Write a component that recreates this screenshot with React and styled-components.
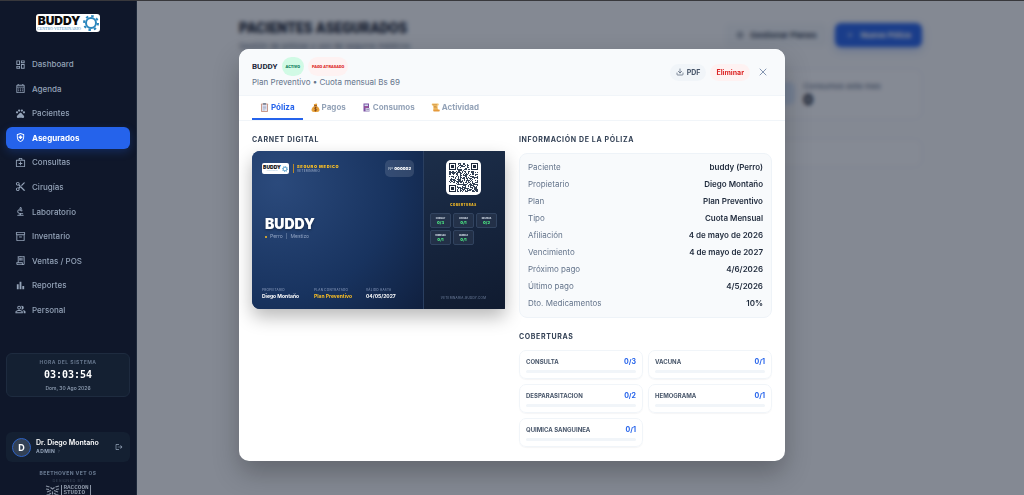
import React from 'react';
import styled, { createGlobalStyle } from 'styled-components';
import {
    MdOutlineDashboard,
    MdOutlineCalendarMonth,
    MdPets,
    MdOutlineHealthAndSafety,
    MdOutlineMedicalServices,
    MdContentCut,
    MdOutlineBiotech,
    MdOutlineInventory2,
    MdOutlineReceiptLong,
    MdBarChart,
    MdOutlinePeopleAlt,
    MdLogout,
} from 'react-icons/md';
import { Download, X, ChevronRight, Plus, Settings } from 'lucide-react';

const menu = [
    { label: 'Dashboard', icon: MdOutlineDashboard },
    { label: 'Agenda', icon: MdOutlineCalendarMonth },
    { label: 'Pacientes', icon: MdPets },
    { label: 'Asegurados', icon: MdOutlineHealthAndSafety, active: true },
    { label: 'Consultas', icon: MdOutlineMedicalServices },
    { label: 'Cirugías', icon: MdContentCut },
    { label: 'Laboratorio', icon: MdOutlineBiotech },
    { label: 'Inventario', icon: MdOutlineInventory2 },
    { label: 'Ventas / POS', icon: MdOutlineReceiptLong },
    { label: 'Reportes', icon: MdBarChart },
    { label: 'Personal', icon: MdOutlinePeopleAlt },
];

const info = [
    ['Paciente', 'buddy (Perro)'],
    ['Propietario', 'Diego Montaño'],
    ['Plan', 'Plan Preventivo'],
    ['Tipo', 'Cuota Mensual'],
    ['Afiliación', '4 de mayo de 2026'],
    ['Vencimiento', '4 de mayo de 2027'],
    ['Próximo pago', '4/6/2026'],
    ['Último pago', '4/5/2026'],
    ['Dto. Medicamentos', '10%'],
];

const coverages = [
    { name: 'CONSULTA', short: 'CONSULT', used: 0, total: 3 },
    { name: 'VACUNA', short: 'VACUNA', used: 0, total: 1 },
    { name: 'DESPARASITACION', short: 'DESPARA', used: 0, total: 2 },
    { name: 'HEMOGRAMA', short: 'HEMOGRA', used: 0, total: 1 },
    { name: 'QUIMICA SANGUINEA', short: 'QUIMICA', used: 0, total: 1 },
];

const BuddyLogo = ({ small }) => (
    <LogoBox $small={small}>
        <LogoText>
            <LogoName $small={small}>BUDDY</LogoName>
            <LogoSub $small={small}>CENTRO VETERINARIO</LogoSub>
        </LogoText>
        <svg width={small ? 6 : 16} height={small ? 6 : 16} viewBox="0 0 32 32">
            <circle cx="16" cy="16" r="10" fill="none" stroke="#2a86bd" strokeWidth="4" />
            <circle cx="16" cy="16" r="14" fill="none" stroke="#2a86bd" strokeWidth="4" strokeDasharray="5 6" />
        </svg>
    </LogoBox>
);

const Clipboard = () => (
    <svg width="9" height="9" viewBox="0 0 18 18">
        <rect x="2" y="1" width="14" height="17" rx="1.5" fill="#c99a8c" />
        <rect x="4" y="3" width="10" height="13" fill="#e6e8f4" />
        <rect x="6" y="0" width="6" height="3.5" rx="1" fill="#7d8799" />
        <path d="M5.5 6.5h7M5.5 9h7M5.5 11.5h7M5.5 14h4" stroke="#8994b5" strokeWidth="1" />
    </svg>
);

const MoneyBag = () => (
    <svg width="9" height="9" viewBox="0 0 18 18">
        <path d="M7 6 5.5 2.5C7 1 8 3 9 1.5S12 1 12.5 2.5L11 6c4 2 6 5 6 8 0 2.5-2 4-5 4H6c-3 0-5-1.5-5-4 0-3 2-6 6-8z" fill="#e8a23a" />
        <path d="M6 5.5h6" stroke="#8a4a1c" strokeWidth="2" />
        <path d="M11.5 9.5c-1-1-4.5-1-4.5 1s4.5 1 4.5 3-3.5 2.2-5 1M9 8v9" stroke="#7a3d14" strokeWidth="1.4" fill="none" />
    </svg>
);

const Receipt = () => (
    <svg width="9" height="9" viewBox="0 0 18 18">
        <path d="M3 1h11v16H3z" fill="#7a4fa3" />
        <path d="M7 10h9v8l-2-1.5-2 1.5-2-1.5L7 18z" fill="#c9c4de" />
        <rect x="5" y="3" width="7" height="3" fill="#cfe0ef" />
        <path d="M5 8h7" stroke="#d65c8a" strokeWidth="1.5" />
        <path d="M9 13h5" stroke="#6c6690" />
    </svg>
);

const Scroll = () => (
    <svg width="9" height="9" viewBox="0 0 18 18">
        <path d="M3 1h11c2 0 2 4 0 4h-1l1 9H5L4 5H3C1 5 1 1 3 1z" fill="#f4c26b" />
        <path d="M5 13h11c2 0 2 4 0 4H6c-2 0-2-4-1-4z" fill="#e59a3c" />
        <path d="M3 3.5h9M6 7h5M6 9.5h6" stroke="#b5712a" strokeWidth="1" />
    </svg>
);

const tabs = [
    { label: 'Póliza', icon: Clipboard, active: true },
    { label: 'Pagos', icon: MoneyBag },
    { label: 'Consumos', icon: Receipt },
    { label: 'Actividad', icon: Scroll },
];

const QR_SIZE = 29;

const inFinder = (x, y) => (x < 8 && y < 8) || (x > QR_SIZE - 9 && y < 8) || (x < 8 && y > QR_SIZE - 9);

const qrPath = () => {
    let seed = 41;
    let d = '';
    for (let y = 0; y < QR_SIZE; y++) {
        for (let x = 0; x < QR_SIZE; x++) {
            seed = (seed * 1103515245 + 12345) % 2147483648;
            if (!inFinder(x, y) && seed / 2147483648 > 0.5) d += `M${x} ${y}h1v1h-1z`;
        }
    }
    return d;
};

const QrCode = () => (
    <QrBox>
        <svg width="29" height="29" viewBox="0 0 29 29">
            <path d={qrPath()} fill="#334155" />
            {[[0, 0], [22, 0], [0, 22]].map(([x, y]) => (
                <g key={`${x}-${y}`}>
                    <rect x={x + 0.5} y={y + 0.5} width="6" height="6" fill="none" stroke="#1e293b" />
                    <rect x={x + 2} y={y + 2} width="3" height="3" fill="#1e293b" />
                </g>
            ))}
        </svg>
    </QrBox>
);

const Sidebar = () => (
    <SidebarWrapper>
        <BuddyLogo />
        <Nav>
            {menu.map(({ label, icon: Icon, active }) => (
                <NavItem href="#" key={label} $active={active}>
                    <Icon size={11} />
                    {label}
                </NavItem>
            ))}
        </Nav>
        <ClockBox>
            <ClockTitle>HORA DEL SISTEMA</ClockTitle>
            <ClockTime>03:03:54</ClockTime>
            <ClockDate>Dom, 30 Ago 2026</ClockDate>
        </ClockBox>
        <UserBox>
            <Avatar>D</Avatar>
            <UserText>
                <UserName>Dr. Diego Montaño</UserName>
                <UserRole>ADMIN <ChevronRight size={4} /></UserRole>
            </UserText>
            <LogoutButton aria-label="Cerrar sesión"><MdLogout size={8} /></LogoutButton>
        </UserBox>
        <Credits>
            <CreditsName>BEETHOVEN VET OS</CreditsName>
            <CreditsBy>DESIGNED BY</CreditsBy>
            <Studio>
                <svg width="15" height="12" viewBox="0 0 30 24" fill="none" stroke="#8b95a5" strokeWidth="2.4">
                    <path d="M2 2l7 2M28 2l-7 2M2 8l6 1M28 8l-6 1M11 5l4 3 4-3M4 14l8-3M26 14l-8-3M9 16l3 2M21 16l-3 2M15 13v6M3 20l7-1M27 20l-7-1" />
                </svg>
                <StudioText>RACCOON<br />STUDIO</StudioText>
            </Studio>
        </Credits>
    </SidebarWrapper>
);

const Background = () => (
    <Main>
        <PageHead>
            <div>
                <PageTitle>PACIENTES ASEGURADOS</PageTitle>
                <PageSub>Gestión de pólizas y uso de seguros médicos</PageSub>
            </div>
            <PageActions>
                <PageButton><Settings size={8} />Gestionar Planes</PageButton>
                <PageButton $primary><Plus size={8} />Nueva Póliza</PageButton>
            </PageActions>
        </PageHead>
        <Stats>
            <StatCard />
            <StatCard />
            <StatCard />
            <StatCard>
                <StatIcon />
                <div>
                    <StatLabel>Consumos este mes</StatLabel>
                    <StatValue>0</StatValue>
                </div>
            </StatCard>
        </Stats>
        <SearchBar />
    </Main>
);

const DigitalCard = () => (
    <Card>
        <CardLeft>
            <CardTop>
                <BuddyLogo small />
                <CardBrand>
                    <CardBrandTitle>SEGURO MEDICO</CardBrandTitle>
                    <CardBrandSub>VETERINARIO</CardBrandSub>
                </CardBrand>
                <CardNumber>Nº <b>000002</b></CardNumber>
            </CardTop>
            <CardMiddle>
                <CardPet>BUDDY</CardPet>
                <CardBreed><Dot />Perro <span>|</span> Mestizo</CardBreed>
            </CardMiddle>
            <CardFoot>
                <CardField><small>PROPIETARIO</small>Diego Montaño</CardField>
                <CardField $gold><small>PLAN CONTRATADO</small>Plan Preventivo</CardField>
                <CardField><small>VÁLIDO HASTA</small>04/05/2027</CardField>
            </CardFoot>
        </CardLeft>
        <CardRight>
            <QrCode />
            <CardCoverTitle>COBERTURAS</CardCoverTitle>
            <MiniGrid>
                {coverages.map(c => (
                    <MiniBox key={c.name}>
                        <small>{c.short}</small>
                        {c.used}/{c.total}
                    </MiniBox>
                ))}
            </MiniGrid>
            <CardSite>VETERINARIA-BUDDY.COM</CardSite>
        </CardRight>
    </Card>
);

const PolicyModal = () => (
    <Overlay>
        <Modal role="dialog" aria-label="Póliza de Buddy">
            <ModalHeader>
                <div>
                    <TitleRow>
                        <ModalTitle>BUDDY</ModalTitle>
                        <Badge $bg="#d1fae5" $color="#047857">ACTIVO</Badge>
                        <Badge $bg="#fef2f2" $color="#dc2626">PAGO ATRASADO</Badge>
                    </TitleRow>
                    <ModalSub>Plan Preventivo • Cuota mensual Bs 69</ModalSub>
                </div>
                <ModalActions>
                    <PillButton><Download size={8} />PDF</PillButton>
                    <PillButton $danger>Eliminar</PillButton>
                    <CloseButton aria-label="Cerrar"><X size={12} strokeWidth={2} /></CloseButton>
                </ModalActions>
            </ModalHeader>
            <Tabs>
                {tabs.map(({ label, icon: Icon, active }) => (
                    <Tab key={label} $active={active}><Icon />{label}</Tab>
                ))}
            </Tabs>
            <ModalBody>
                <section>
                    <SectionTitle $tight>CARNET DIGITAL</SectionTitle>
                    <DigitalCard />
                </section>
                <section>
                    <SectionTitle>INFORMACIÓN DE LA PÓLIZA</SectionTitle>
                    <InfoBox>
                        {info.map(([name, value]) => (
                            <InfoRow key={name}>
                                <dt>{name}</dt>
                                <dd>{value}</dd>
                            </InfoRow>
                        ))}
                    </InfoBox>
                    <SectionTitle>COBERTURAS</SectionTitle>
                    <CoverGrid>
                        {coverages.map(c => (
                            <CoverCard key={c.name}>
                                <CoverHead>{c.name}<span>{c.used}/{c.total}</span></CoverHead>
                                <Track><Fill style={{ width: `${(c.used / c.total) * 100}%` }} /></Track>
                            </CoverCard>
                        ))}
                    </CoverGrid>
                </section>
            </ModalBody>
        </Modal>
    </Overlay>
);

const App = () => (
    <>
        <GlobalStyle />
        <Layout>
            <Sidebar />
            <Background />
            <PolicyModal />
        </Layout>
    </>
);

const display = `Roboto, 'Liberation Sans', sans-serif`;

const GlobalStyle = createGlobalStyle`
* { box-sizing: border-box; }
body { margin: 0; font-family: 'Inter', sans-serif; background: #f8fafc; overflow: hidden; }
button { font-family: inherit; border: 0; cursor: pointer; }
h1, h2, h3, dl, dt, dd { margin: 0; }
svg { flex-shrink: 0; }
`;

const Layout = styled.div`
display: flex;
height: 100vh;
overflow: hidden;
border-top: 1px solid #38383c;
`;

/* sidebar */
const SidebarWrapper = styled.aside`
position: relative;
z-index: 5;
display: flex;
flex-direction: column;
flex-shrink: 0;
width: 137px;
padding: 13px 6px 0;
background: #0f172a;
border-right: 1px solid #1e293b;
> * { flex-shrink: 0; }
`;
const LogoBox = styled.div`
display: flex;
align-items: center;
align-self: center;
justify-content: center;
gap: ${p => (p.$small ? 1 : 2)}px;
width: ${p => (p.$small ? 27 : 64)}px;
height: ${p => (p.$small ? 11 : 18)}px;
border-radius: ${p => (p.$small ? 2 : 3)}px;
background: #fff;
`;
const LogoText = styled.div`
display: flex;
flex-direction: column;
align-items: center;
`;
const LogoName = styled.span`
font-size: ${p => (p.$small ? 5 : 12)}px;
line-height: ${p => (p.$small ? 5 : 11)}px;
font-weight: 900;
color: #0b0b0d;
`;
const LogoSub = styled.span`
font-family: 'Liberation Serif', serif;
font-size: ${p => (p.$small ? 1 : 4)}px;
line-height: ${p => (p.$small ? 2 : 5)}px;
white-space: nowrap;
color: #3b8fc4;
`;
const Nav = styled.nav`
display: flex;
flex-direction: column;
justify-content: space-between;
height: 268px;
margin-top: 21px;
`;
const NavItem = styled.a`
display: flex;
align-items: center;
gap: 6px;
height: 22px;
padding-left: 9px;
border-radius: 6px;
font-size: 8px;
font-weight: ${p => (p.$active ? 700 : 500)};
text-decoration: none;
color: ${p => (p.$active ? '#fff' : '#94a3b8')};
background: ${p => (p.$active ? '#2563eb' : 'transparent')};
box-shadow: ${p => (p.$active ? '0 3px 8px rgba(37, 99, 235, 0.25)' : 'none')};
`;
const ClockBox = styled.div`
display: flex;
flex-direction: column;
align-items: center;
height: 44px;
margin-top: 32px;
padding-top: 5px;
border: 1px solid #1e2b3f;
border-radius: 6px;
background: #142032;
`;
const ClockTitle = styled.span`
font-size: 5px;
line-height: 6px;
font-weight: 700;
letter-spacing: 0.1em;
color: #64748b;
`;
const ClockTime = styled.span`
margin-top: 4px;
font-family: 'DejaVu Sans Mono', monospace;
font-size: 10px;
line-height: 12px;
font-weight: 700;
color: #fff;
`;
const ClockDate = styled.span`
margin-top: 4px;
font-size: 5px;
line-height: 6px;
font-weight: 500;
color: #94a3b8;
`;
const UserBox = styled.div`
display: flex;
align-items: center;
gap: 5px;
height: 30px;
margin-top: 35px;
padding: 0 6px;
border-radius: 6px;
background: #142032;
`;
const Avatar = styled.div`
display: flex;
align-items: center;
justify-content: center;
width: 19px;
height: 19px;
border: 1px solid #2f62c4;
border-radius: 50%;
background: #334155;
font-size: 9px;
font-weight: 700;
color: #fff;
`;
const UserText = styled.div`
flex: 1;
`;
const UserName = styled.div`
font-size: 7px;
line-height: 8px;
font-weight: 600;
white-space: nowrap;
color: #fff;
`;
const UserRole = styled.div`
display: flex;
align-items: center;
gap: 2px;
font-size: 5px;
line-height: 8px;
font-weight: 700;
letter-spacing: 0.08em;
color: #94a3b8;
`;
const LogoutButton = styled.button`
display: flex;
padding: 1px;
background: none;
color: #94a3b8;
`;
const Credits = styled.div`
display: flex;
flex-direction: column;
align-items: center;
margin-top: 8px;
`;
const CreditsName = styled.span`
font-size: 5px;
line-height: 6px;
font-weight: 800;
letter-spacing: 0.08em;
color: #64748b;
`;
const CreditsBy = styled.span`
margin-top: 2px;
font-size: 4px;
line-height: 5px;
letter-spacing: 0.1em;
color: #3b475a;
`;
const Studio = styled.div`
display: flex;
gap: 1px;
margin-top: 2px;
`;
const StudioText = styled.span`
padding: 0 1px;
border: 1px solid #8b95a5;
border-width: 0 1px;
font-family: 'Liberation Mono', monospace;
font-size: 6px;
line-height: 5px;
font-weight: 700;
color: #8b95a5;
`;

/* page behind the modal */
const Main = styled.main`
flex: 1;
max-width: 683px;
margin: 0 auto;
padding-top: 16px;
`;
const PageHead = styled.div`
display: flex;
justify-content: space-between;
`;
const PageTitle = styled.h1`
font-family: ${display};
font-size: 14px;
line-height: 22px;
font-weight: 900;
color: #0f172a;
`;
const PageSub = styled.p`
margin: 0;
font-size: 8px;
line-height: 14px;
color: #64748b;
`;
const PageActions = styled.div`
display: flex;
align-items: center;
gap: 8px;
`;
const PageButton = styled.button`
display: flex;
align-items: center;
gap: 6px;
height: 24px;
padding: 0 11px;
border-radius: 6px;
font-size: 8px;
font-weight: 700;
color: ${p => (p.$primary ? '#fff' : '#334155')};
background: ${p => (p.$primary ? '#2563eb' : '#f1f5f9')};
box-shadow: ${p => (p.$primary ? '0 3px 8px rgba(37, 99, 235, 0.3)' : 'none')};
`;
const Stats = styled.div`
display: grid;
grid-template-columns: repeat(4, 1fr);
gap: 12px;
margin-top: 16px;
`;
const StatCard = styled.div`
display: flex;
gap: 8px;
height: 50px;
padding: 12px 11px;
border: 1px solid #eef2f7;
border-radius: 8px;
background: #fbfcfe;
`;
const StatIcon = styled.div`
width: 23px;
height: 23px;
border-radius: 6px;
background: #dbeafe;
`;
const StatLabel = styled.div`
font-size: 8px;
line-height: 8px;
font-weight: 500;
color: #64748b;
`;
const StatValue = styled.div`
font-size: 14px;
line-height: 19px;
font-weight: 900;
color: #0f172a;
`;
const SearchBar = styled.div`
height: 28px;
margin-top: 20px;
border: 1px solid #eef2f7;
border-radius: 8px;
background: #fbfcfe;
`;

/* modal */
const Overlay = styled.div`
position: fixed;
inset: 1px 0 0;
z-index: 3;
display: flex;
align-items: center;
justify-content: center;
padding: 14px 16px 0;
background: rgba(15, 23, 42, 0.5);
backdrop-filter: blur(2px);
`;
const Modal = styled.div`
width: 100%;
max-width: 546px;
border-radius: 10px;
overflow: hidden;
background: #fff;
box-shadow: 0 12px 26px rgba(0, 0, 0, 0.25);
`;
const ModalHeader = styled.header`
display: flex;
justify-content: space-between;
align-items: center;
height: 47px;
padding: 0 13px;
border-bottom: 1px solid #f1f5f9;
background: #f8fafc;
`;
const TitleRow = styled.div`
display: flex;
align-items: center;
gap: 4px;
`;
const ModalTitle = styled.h2`
font-family: ${display};
font-size: 8px;
line-height: 19px;
font-weight: 700;
color: #1e293b;
`;
const Badge = styled.span`
padding: 0 4px;
border-radius: 10px;
font-family: ${display};
font-size: 4px;
line-height: 19px;
font-weight: 900;
color: ${p => p.$color};
background: ${p => p.$bg};
`;
const ModalSub = styled.div`
font-size: 8px;
line-height: 12px;
color: #64748b;
`;
const ModalActions = styled.div`
display: flex;
align-items: center;
gap: 4px;
`;
const PillButton = styled.button`
display: flex;
align-items: center;
gap: 3px;
height: 17px;
padding: 0 6px;
border-radius: 9px;
font-size: 7px;
font-weight: 700;
color: ${p => (p.$danger ? '#dc2626' : '#475569')};
background: ${p => (p.$danger ? '#fef2f2' : '#f1f5f9')};
`;
const CloseButton = styled.button`
display: flex;
padding: 0 3px;
background: none;
color: #8495b0;
`;
const Tabs = styled.div`
display: flex;
height: 25px;
padding: 0 13px;
border-bottom: 1px solid #f1f5f9;
`;
const Tab = styled.button`
display: flex;
align-items: center;
gap: 2px;
padding: 0 8px;
border-bottom: 2px solid ${p => (p.$active ? '#2563eb' : 'transparent')};
background: none;
font-size: 8px;
font-weight: 700;
color: ${p => (p.$active ? '#2563eb' : '#94a3b8')};
`;
const ModalBody = styled.div`
display: grid;
grid-template-columns: repeat(2, minmax(0, 1fr));
gap: 14px;
padding: 13px 13px 14px;
`;
const SectionTitle = styled.h3`
margin-bottom: ${p => (p.$tight ? 6 : 8)}px;
font-size: 7px;
line-height: 11px;
font-weight: 700;
letter-spacing: 0.09em;
color: #334155;
`;
const InfoBox = styled.dl`
margin-bottom: 13px;
padding: 5px 8px;
border: 1px solid #eef3f8;
border-radius: 8px;
background: #f8fafc;
`;
const InfoRow = styled.div`
display: flex;
justify-content: space-between;
font-size: 8px;
line-height: 17px;
dt { color: #64748b; }
dd { font-weight: 600; color: #1e293b; }
`;
const CoverGrid = styled.div`
display: grid;
grid-template-columns: 1fr 1fr;
gap: 5px;
`;
const CoverCard = styled.div`
height: 29px;
padding: 6px;
border: 1px solid #f1f5f9;
border-radius: 7px;
box-shadow: 0 1px 1px rgba(15, 23, 42, 0.04);
`;
const CoverHead = styled.div`
display: flex;
justify-content: space-between;
font-size: 6px;
line-height: 9px;
font-weight: 700;
color: #475569;
span { font-size: 7px; color: #2563eb; }
`;
const Track = styled.div`
height: 3px;
margin-top: 4px;
border-radius: 2px;
background: #f1f5f9;
`;
const Fill = styled.div`
height: 100%;
border-radius: 2px;
background: #2563eb;
`;

/* digital card */
const Card = styled.div`
display: flex;
height: 158px;
border-radius: 8px 1px 1px 8px;
overflow: hidden;
background: linear-gradient(135deg, #1e3a6e, #0f172a);
box-shadow: 0 8px 18px rgba(0, 0, 0, 0.28);
`;
const CardLeft = styled.div`
display: flex;
flex: 1;
flex-direction: column;
justify-content: space-between;
min-width: 0;
padding: 9px 9px 9px 10px;
border-right: 1px solid #2a3f60;
background: radial-gradient(circle at 15% 20%, #2b4a7c, #18335f 60%, #10203f);
`;
const CardTop = styled.div`
display: flex;
gap: 4px;
`;
const CardBrand = styled.div`
flex: 1;
align-self: center;
padding-left: 3px;
border-left: 1px solid #b98a2a;
`;
const CardBrandTitle = styled.div`
font-size: 4px;
line-height: 5px;
font-weight: 900;
letter-spacing: 0.16em;
color: #fbbf24;
`;
const CardBrandSub = styled.div`
font-size: 3px;
line-height: 4px;
letter-spacing: 0.1em;
color: #a9b8d0;
`;
const CardNumber = styled.div`
padding: 0 3px;
border-radius: 5px;
background: rgba(255, 255, 255, 0.12);
font-size: 4px;
line-height: 17px;
color: #cbd5e1;
b { font-weight: 900; color: #fff; }
`;
const CardMiddle = styled.div`
margin-bottom: 8px;
padding-left: 3px;
`;
const CardPet = styled.div`
font-size: 14px;
line-height: 16px;
font-weight: 900;
color: #fff;
text-shadow: 0 1px 3px rgba(0, 0, 0, 0.4);
`;
const CardBreed = styled.div`
display: flex;
align-items: center;
gap: 3px;
font-size: 5px;
line-height: 9px;
color: #93a5c4;
`;
const Dot = styled.i`
width: 2px;
height: 2px;
border-radius: 50%;
background: #fbbf24;
`;
const CardFoot = styled.div`
display: grid;
grid-template-columns: 52px 52px 1fr;
`;
const CardField = styled.div`
font-size: 5px;
line-height: 7px;
font-weight: 700;
white-space: nowrap;
color: ${p => (p.$gold ? '#fbbf24' : '#fff')};
small {
    display: block;
    font-size: 3px;
    line-height: 5px;
    font-weight: 500;
    letter-spacing: 0.1em;
    color: #8496b8;
}
`;
const CardRight = styled.div`
display: flex;
flex-direction: column;
flex-shrink: 0;
align-items: center;
width: 81px;
padding: 9px 8px 8px 6px;
background: linear-gradient(160deg, #1c2e4a, #101b30);
`;
const QrBox = styled.div`
padding: 3px;
border-radius: 5px;
background: #fff;
svg { display: block; }
`;
const CardCoverTitle = styled.div`
margin: 8px 0 5px;
font-size: 3px;
line-height: 5px;
font-weight: 900;
letter-spacing: 0.18em;
color: #fbbf24;
`;
const MiniGrid = styled.div`
display: grid;
grid-template-columns: repeat(3, 1fr);
gap: 2px;
width: 100%;
`;
const MiniBox = styled.div`
height: 15px;
padding-top: 2px;
border: 1px solid #31435f;
border-radius: 2px;
background: rgba(255, 255, 255, 0.06);
text-align: center;
font-size: 4px;
line-height: 6px;
font-weight: 900;
color: #4ade80;
small {
    display: block;
    font-size: 2px;
    line-height: 4px;
    color: #cbd5e1;
}
`;
const CardSite = styled.div`
margin-top: auto;
font-size: 3px;
line-height: 5px;
letter-spacing: 0.1em;
color: #7385a3;
`;

export default App;
